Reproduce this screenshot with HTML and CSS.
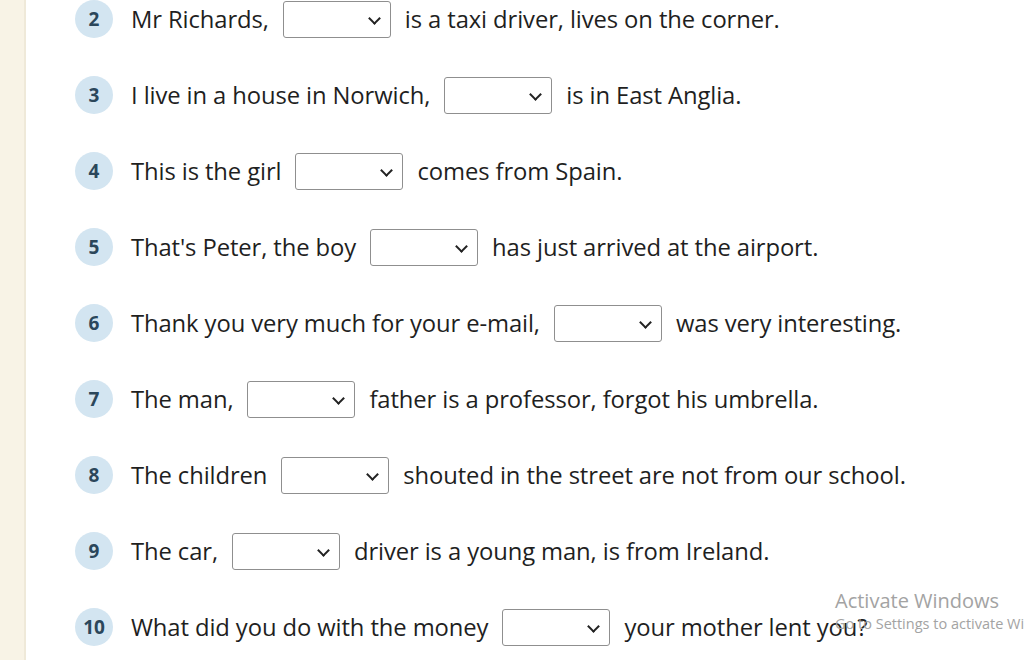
FILE: index.html
```html
<!DOCTYPE html>
<html lang="en">
<head>
  <meta charset="UTF-8">
  <meta name="viewport" content="width=device-width, initial-scale=1.0">
  <title>Relative clauses</title>
  <link rel="stylesheet" href="styles.css">
</head>
<body>
  <div class="page">
    <aside class="side"></aside>
    <main class="exercise">
      <ol class="items">
        <li class="item">
          <span class="num">2</span>
          <p class="sentence">Mr Richards,
            <span class="pick"><select><option></option><option>who</option><option>which</option><option>whose</option><option>that</option></select></span>
            is a taxi driver, lives on the corner.</p>
        </li>
        <li class="item">
          <span class="num">3</span>
          <p class="sentence">I live in a house in Norwich,
            <span class="pick"><select><option></option><option>who</option><option>which</option><option>whose</option><option>that</option></select></span>
            is in East Anglia.</p>
        </li>
        <li class="item">
          <span class="num">4</span>
          <p class="sentence">This is the girl
            <span class="pick"><select><option></option><option>who</option><option>which</option><option>whose</option><option>that</option></select></span>
            comes from Spain.</p>
        </li>
        <li class="item">
          <span class="num">5</span>
          <p class="sentence">That's Peter, the boy
            <span class="pick"><select><option></option><option>who</option><option>which</option><option>whose</option><option>that</option></select></span>
            has just arrived at the airport.</p>
        </li>
        <li class="item">
          <span class="num">6</span>
          <p class="sentence">Thank you very much for your e-mail,
            <span class="pick"><select><option></option><option>who</option><option>which</option><option>whose</option><option>that</option></select></span>
            was very interesting.</p>
        </li>
        <li class="item">
          <span class="num">7</span>
          <p class="sentence">The man,
            <span class="pick"><select><option></option><option>who</option><option>which</option><option>whose</option><option>that</option></select></span>
            father is a professor, forgot his umbrella.</p>
        </li>
        <li class="item">
          <span class="num">8</span>
          <p class="sentence">The children
            <span class="pick"><select><option></option><option>who</option><option>which</option><option>whose</option><option>that</option></select></span>
            shouted in the street are not from our school.</p>
        </li>
        <li class="item">
          <span class="num">9</span>
          <p class="sentence">The car,
            <span class="pick"><select><option></option><option>who</option><option>which</option><option>whose</option><option>that</option></select></span>
            driver is a young man, is from Ireland.</p>
        </li>
        <li class="item">
          <span class="num">10</span>
          <p class="sentence">What did you do with the money
            <span class="pick"><select><option></option><option>who</option><option>which</option><option>whose</option><option>that</option></select></span>
            your mother lent you?</p>
        </li>
      </ol>
    </main>
  </div>

  <div class="activate">
    <div class="activate-title">Activate Windows</div>
    <div class="activate-sub">Go to Settings to activate Windows.</div>
  </div>
</body>
</html>
```

FILE: styles.css
```css
html, body {
  margin: 0;
  height: 100%;
  overflow: hidden;
}
body {
  font-family: "Open Sans", "Noto Sans", Arial, sans-serif;
  background-color: #ffffff;
  color: #1f1f1f;
}
.page {
  display: flex;
  height: 100%;
}
.side {
  width: 24px;
  flex-shrink: 0;
  background-color: #f8f3e6;
  border-right: 2px solid #efe9d9;
}
.exercise {
  flex: 1;
  padding-left: 49px;
}
.items {
  list-style: none;
  margin: 0;
  padding: 0;
  display: flex;
  flex-direction: column;
  gap: 38px;
}
.item {
  display: flex;
  align-items: center;
  height: 38px;
}
.num {
  width: 38px;
  height: 38px;
  border-radius: 50%;
  background-color: #d3e5f1;
  color: #2b475b;
  font-weight: 700;
  font-size: 19px;
  display: flex;
  align-items: center;
  justify-content: center;
  flex-shrink: 0;
}
.sentence {
  margin: 0 0 0 18px;
  font-size: 23.8px;
  letter-spacing: -0.1px;
  white-space: nowrap;
  display: flex;
  align-items: center;
  gap: 14px;
}
.pick {
  position: relative;
  display: inline-block;
  width: 108px;
  height: 37px;
}
.pick select {
  -webkit-appearance: none;
  appearance: none;
  width: 100%;
  height: 100%;
  border: 1px solid #8f8f8f;
  border-radius: 3px;
  background-color: #fff;
  font-family: inherit;
  font-size: 16px;
  padding: 0 28px 0 8px;
}
.pick::after {
  content: "";
  position: absolute;
  right: 12px;
  top: 13px;
  width: 7px;
  height: 7px;
  border-right: 2px solid #222;
  border-bottom: 2px solid #222;
  transform: rotate(45deg);
  pointer-events: none;
}
.activate {
  position: absolute;
  left: 835px;
  top: 587px;
  color: #a3a3a3;
  white-space: nowrap;
  pointer-events: none;
}
.activate-title {
  font-size: 20px;
}
.activate-sub {
  font-size: 14.5px;
}
```
